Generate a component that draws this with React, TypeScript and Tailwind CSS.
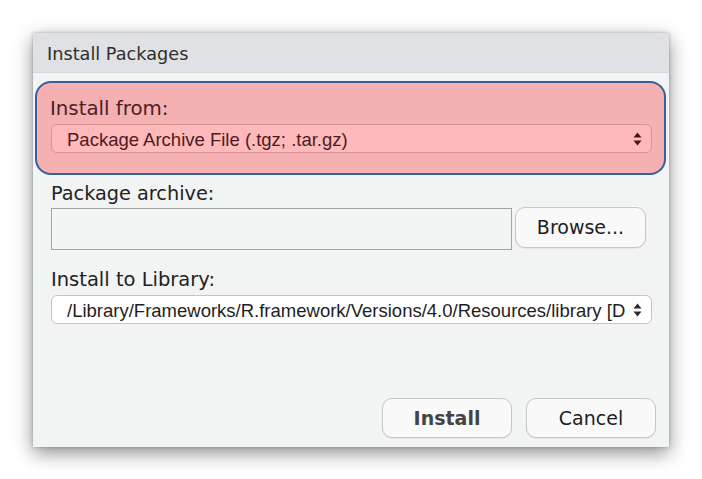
import React from 'react';

const labelFont = { fontFamily: '"DejaVu Sans", Verdana, sans-serif' };
const selectFont = { fontFamily: '"Liberation Sans", Arial, sans-serif' };

const Arrows: React.FC<{ color: string }> = ({ color }) => (
  <svg width="9" height="14" viewBox="0 0 9 14" className="shrink-0">
    <path d="M4.5 0.5 L8.5 5.5 L0.5 5.5 Z" fill={color} />
    <path d="M4.5 13.5 L8.5 8.5 L0.5 8.5 Z" fill={color} />
  </svg>
);

interface SelectProps {
  value: string;
  className: string;
  textColor: string;
  arrowColor: string;
}

const FakeSelect: React.FC<SelectProps> = ({ value, className, textColor, arrowColor }) => (
  <div className={`h-[29px] flex items-center pl-[15px] pr-[9px] gap-2 rounded-[6px] ${className}`}>
    <span
      className={`flex-1 overflow-hidden whitespace-nowrap text-[18.5px] leading-[22px] pt-[2px] ${textColor}`}
      style={selectFont}
    >
      {value}
    </span>
    <Arrows color={arrowColor} />
  </div>
);

const Button: React.FC<{ label: string; bold?: boolean; className?: string }> = ({ label, bold, className = '' }) => (
  <div
    className={`flex items-center justify-center rounded-[10px] border border-[#c6c6c6] bg-[#f9f9f9] shadow-[0_1px_1px_rgba(0,0,0,0.06)] text-[19px] ${bold ? 'font-bold text-[#444]' : 'text-[#1e1e1e]'} ${className}`}
    style={labelFont}
  >
    {label}
  </div>
);

export default function App() {
  return (
    <div className="w-[702px] h-[479px] bg-white pl-[33px] pt-[33px]">
      <div className="w-[636px] h-[414px] bg-[#f2f3f3] flex flex-col shadow-[0_6px_18px_rgba(0,0,0,0.45),0_0_3px_rgba(0,0,0,0.25)]">
        {/* title bar */}
        <div className="h-[40px] shrink-0 bg-[#e0e1e4] border-b border-[#d6d7d9] flex items-center pl-[14px] pt-[4px]">
          <span className="text-[17.7px] text-[#2e2e2e]" style={labelFont}>Install Packages</span>
        </div>

        {/* highlighted "install from" group */}
        <div className="mt-[8px] ml-[2px] mr-[3px] h-[94px] rounded-[16px] border-2 border-[#3a5d9c] bg-[#f5b0b1] pt-[15px] pl-[13px] pr-[12px]">
          <div className="h-[22px] leading-[22px] text-[19.8px] text-[#4b2224]" style={labelFont}>
            Install from:
          </div>
          <FakeSelect
            value="Package Archive File (.tgz; .tar.gz)"
            className="mt-[4px] ml-[1px] bg-[#ffb9ba] border border-[#d69495]"
            textColor="text-[#4a1c1e]"
            arrowColor="#4a1416"
          />
        </div>

        <div className="px-[18px] flex flex-col">
          <div className="mt-[8px] h-[22px] leading-[22px] text-[19.3px] text-[#222]" style={labelFont}>
            Package archive:
          </div>
          <div className="mt-[3px] flex gap-[3px]">
            <div className="w-[461px] h-[42px] border-[1.5px] border-[#a3a3a3] bg-[#f3f4f4]" />
            <Button label="Browse..." className="w-[131px] h-[41px] -mt-[1px]" />
          </div>

          <div className="mt-[19px] h-[22px] leading-[22px] text-[19.5px] text-[#222]" style={labelFont}>
            Install to Library:
          </div>
          <FakeSelect
            value="/Library/Frameworks/R.framework/Versions/4.0/Resources/library [Default]"
            className="mt-[4px] w-[601px] bg-white border border-[#c4c4c4]"
            textColor="text-[#1e1e1e]"
            arrowColor="#2a2a2a"
          />

          <div className="mt-[74px] flex justify-end gap-[14px] -mr-[5px]">
            <Button label="Install" bold className="w-[130px] h-[40px]" />
            <Button label="Cancel" className="w-[130px] h-[40px]" />
          </div>
        </div>
      </div>
    </div>
  );
}
